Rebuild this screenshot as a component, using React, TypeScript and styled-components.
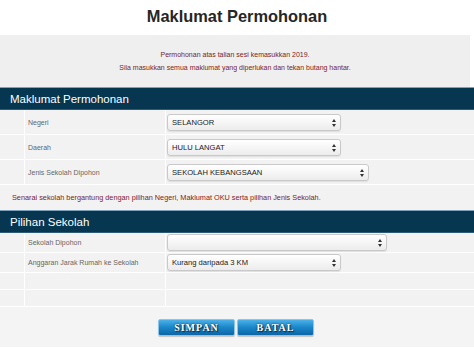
import React from 'react';
import styled, { createGlobalStyle } from 'styled-components';

const GlobalStyle = createGlobalStyle`
  body {
    margin: 0;
    background: #ffffff;
    font-family: 'Liberation Sans', Arial, sans-serif;
  }
`;

const Page = styled.div`
  width: 474px;
  height: 348px;
  overflow: hidden;
  background: #ffffff;
`;

const Title = styled.h1`
  margin: 0;
  height: 35px;
  display: flex;
  align-items: center;
  justify-content: center;
  font-size: 16.4px;
  font-weight: 700;
  color: #262626;
  padding-bottom: 3px;
  box-sizing: border-box;
`;

const InfoPanel = styled.div`
  height: 52px;
  margin-right: 4px;
  background: #efefef;
  display: flex;
  flex-direction: column;
  align-items: center;
  justify-content: center;
  gap: 6px;
  font-size: 7px;
  color: #7b1d25;
`;

const SectionBar = styled.div`
  height: 23px;
  box-sizing: border-box;
  background: #063650;
  border-top: 1px solid #7fa3ba;
  border-bottom: 1px solid #2d5a75;
  color: #ffffff;
  font-size: 11.5px;
  display: flex;
  align-items: center;
  padding-left: 10px;
`;

const Row = styled.div<{ $h: number }>`
  display: grid;
  grid-template-columns: 25px 141px 1fr;
  height: ${p => p.$h}px;
  background: #f2f2f2;
  border-bottom: 1px solid #ffffff;
`;

const Cell = styled.div`
  display: flex;
  align-items: center;
  border-right: 1px solid #ffffff;
  font-size: 7px;
  color: #666666;
  padding-left: 3px;
  &:first-child {
    padding-left: 0;
  }
  &:last-child {
    border-right: none;
    padding-left: 1px;
  }
`;

const NoteRow = styled.div`
  height: 25px;
  background: #f2f2f2;
  display: flex;
  align-items: center;
  padding-left: 12px;
  font-size: 7.3px;
  color: #7b1d25;
`;

const SelectWrap = styled.div<{ $w: number }>`
  position: relative;
  width: ${p => p.$w}px;
  height: 17px;
`;

const Select = styled.select`
  appearance: none;
  width: 100%;
  height: 100%;
  box-sizing: border-box;
  border: 1px solid #c9c9c9;
  border-radius: 3px;
  background: linear-gradient(#ffffff, #ececec);
  box-shadow: 0 1px 1px rgba(0, 0, 0, 0.08);
  font-family: 'Liberation Sans', Arial, sans-serif;
  font-size: 7.6px;
  color: #1a1a1a;
  padding: 0 0 0 4px;
  margin: 0;
`;

const Arrows = styled.svg`
  position: absolute;
  right: 5px;
  top: 5px;
  pointer-events: none;
`;

const ButtonArea = styled.div`
  height: 40px;
  background: #f4f4f4;
  display: flex;
  justify-content: center;
  align-items: center;
  gap: 2px;
  padding-right: 2px;
`;

const Button = styled.button`
  width: 77px;
  height: 17px;
  border: 1px solid #8fc4e6;
  border-radius: 2px;
  background: linear-gradient(#4ab0e8 0%, #1a86c8 50%, #0b66a6 100%);
  color: #ffffff;
  font-family: 'Liberation Serif', 'Times New Roman', serif;
  font-weight: 700;
  font-size: 10px;
  letter-spacing: 1px;
  text-shadow: 0 0 2px #0b2c44, 1px 1px 1px #0b2c44;
  padding: 0;
  box-shadow: 0 1px 1px rgba(0, 0, 0, 0.2);
`;

type Field = { label: string; value: string; width: number };

const section1: Field[] = [
  { label: 'Negeri', value: 'SELANGOR', width: 174 },
  { label: 'Daerah', value: 'HULU LANGAT', width: 174 },
  { label: 'Jenis Sekolah Dipohon', value: 'SEKOLAH KEBANGSAAN', width: 202 },
];

const section2: Field[] = [
  { label: 'Sekolah Dipohon', value: '', width: 220 },
  { label: 'Anggaran Jarak Rumah ke Sekolah', value: 'Kurang daripada 3 KM', width: 174 },
];

function SelectField({ value, width }: { value: string; width: number }) {
  return (
    <SelectWrap $w={width}>
      <Select defaultValue={value}>
        <option value={value}>{value}</option>
      </Select>
      <Arrows width="4" height="8" viewBox="0 0 4 8">
        <path d="M2 0 L4 3 L0 3 Z" fill="#333" />
        <path d="M2 8 L4 5 L0 5 Z" fill="#333" />
      </Arrows>
    </SelectWrap>
  );
}

export default function App() {
  return (
    <Page>
      <GlobalStyle />
      <Title>Maklumat Permohonan</Title>
      <InfoPanel>
        <span>Permohonan atas talian sesi kemasukkan 2019.</span>
        <span>Sila masukkan semua maklumat yang diperlukan dan tekan butang hantar.</span>
      </InfoPanel>

      <SectionBar>Maklumat Permohonan</SectionBar>
      {section1.map(f => (
        <Row $h={24} key={f.label}>
          <Cell />
          <Cell>{f.label}</Cell>
          <Cell>
            <SelectField value={f.value} width={f.width} />
          </Cell>
        </Row>
      ))}
      <NoteRow>
        Senarai sekolah bergantung dengan pilihan Negeri, Maklumat OKU serta pilihan Jenis Sekolah.
      </NoteRow>

      <SectionBar>Pilihan Sekolah</SectionBar>
      {section2.map(f => (
        <Row $h={19} key={f.label}>
          <Cell />
          <Cell>{f.label}</Cell>
          <Cell>
            <SelectField value={f.value} width={f.width} />
          </Cell>
        </Row>
      ))}
      <Row $h={16}>
        <Cell />
        <Cell />
        <Cell />
      </Row>
      <Row $h={16}>
        <Cell />
        <Cell />
        <Cell />
      </Row>

      <ButtonArea>
        <Button>SIMPAN</Button>
        <Button>BATAL</Button>
      </ButtonArea>
    </Page>
  );
}
